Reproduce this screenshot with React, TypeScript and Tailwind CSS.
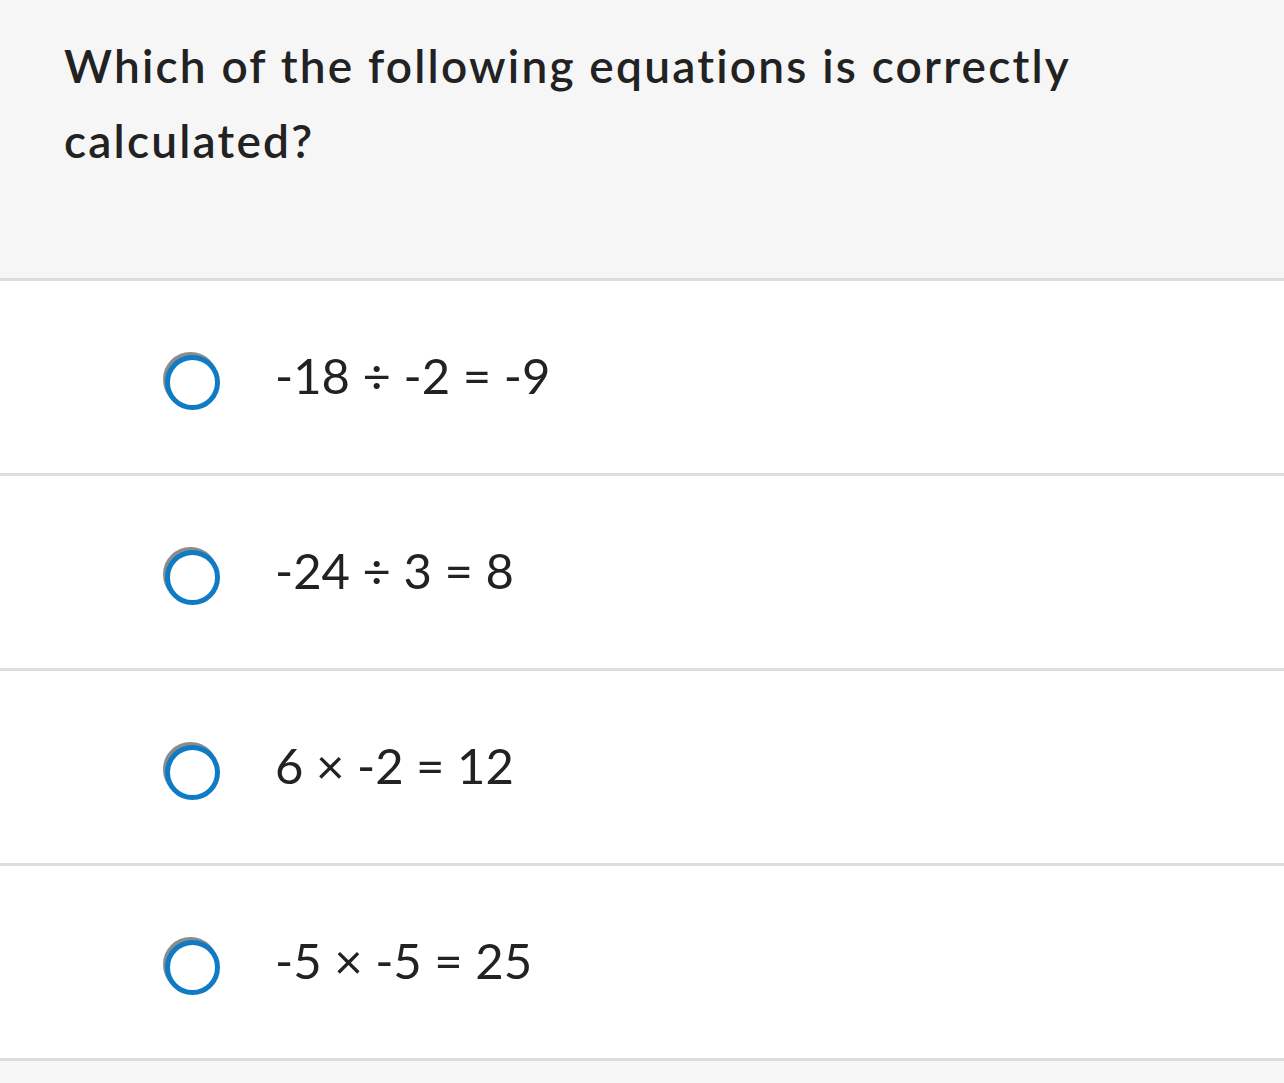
const options = ['-18 ÷ -2 = -9', '-24 ÷ 3 = 8', '6 × -2 = 12', '-5 × -5 = 25']

function Radio() {
  return (
    <span className="relative block w-[55px] h-[55px] shrink-0 mt-[10px]">
      <span className="absolute left-[-2px] top-[-3px] w-[55px] h-[55px] rounded-full border-[5px] border-[#8c8c8c]" />
      <span className="absolute inset-0 rounded-full border-[5px] border-[#0f7bc4] bg-white" />
    </span>
  )
}

export default function App() {
  return (
    <div className="min-h-screen bg-[#f6f6f6] text-[#222222] font-['Lato','Liberation_Sans',sans-serif]">
      <div className="h-[281px] px-[64px] pt-[28px] border-b-[3px] border-[#dcdde0]">
        <h1 className="text-[46px] leading-[75px] font-semibold tracking-[2.2px] max-w-[1120px]">
          Which of the following equations is correctly calculated?
        </h1>
      </div>
      <div className="bg-white">
        {options.map((opt) => (
          <label
            key={opt}
            className="flex items-center h-[195px] pl-[165px] border-b-[3px] border-[#dcdde0] cursor-pointer"
          >
            <Radio />
            <span className="ml-[55px] mb-[3px] text-[49px] leading-none">{opt}</span>
          </label>
        ))}
      </div>
    </div>
  )
}
